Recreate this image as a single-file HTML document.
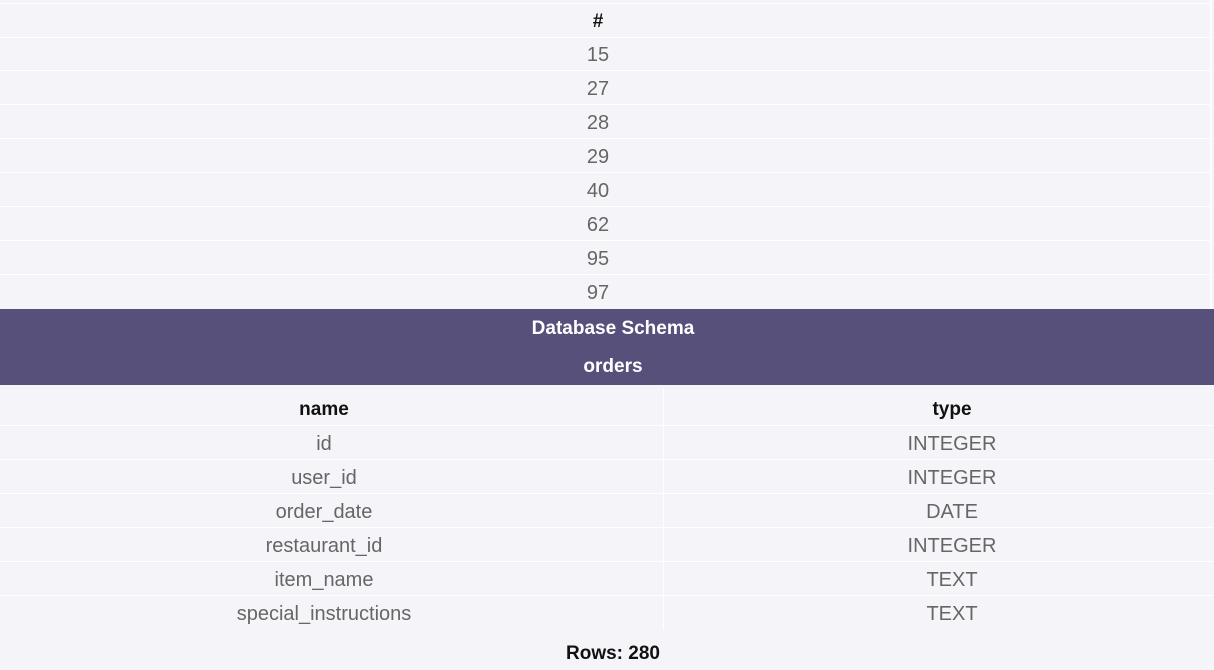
<!DOCTYPE html>
<html><head><style>
html,body{margin:0;padding:0;width:1214px;height:670px;background:#f5f4f9;overflow:hidden;font-family:"Liberation Sans",sans-serif;}
.r{position:absolute;left:0;height:33px;border-bottom:1px solid #fff;line-height:36px;font-size:20px;color:#666;}
.top{width:1210px;}
.t{position:absolute;left:0;width:1196px;text-align:center}
.h{color:#111;font-weight:bold;font-size:19px;}
.band{position:absolute;left:0;top:309px;width:1214px;height:76px;background:#56507a;color:#fff;font-weight:bold;font-size:19px;text-align:center;}
.c1{position:absolute;left:0;width:648px;text-align:center}
.c2{position:absolute;left:664px;width:576px;text-align:center}
.s{width:1214px}
.div{position:absolute;left:663px;top:388px;width:1px;height:242px;background:#fff}
.rb{position:absolute;left:1210px;top:0;width:2px;height:309px;background:#fff}
</style></head><body>
<div class="r top h" style="top:3px;border-top:1px solid #fff;height:33px"><span class="t">#</span></div>
<div class="r top" style="top:37px"><span class="t">15</span></div>
<div class="r top" style="top:71px"><span class="t">27</span></div>
<div class="r top" style="top:105px"><span class="t">28</span></div>
<div class="r top" style="top:139px"><span class="t">29</span></div>
<div class="r top" style="top:173px"><span class="t">40</span></div>
<div class="r top" style="top:207px"><span class="t">62</span></div>
<div class="r top" style="top:241px"><span class="t">95</span></div>
<div class="r top" style="top:275px;border-bottom:none"><span class="t">97</span></div>
<div class="rb"></div>
<div class="band"><div style="position:absolute;top:5px;width:100%;line-height:30px;left:6px">Database Schema</div><div style="position:absolute;top:43px;width:100%;line-height:30px;left:6px">orders</div></div>
<div class="r s h" style="top:388px;height:37px;line-height:43px"><span class="c1">name</span><span class="c2">type</span></div>
<div class="r s" style="top:426px"><span class="c1">id</span><span class="c2">INTEGER</span></div>
<div class="r s" style="top:460px"><span class="c1">user_id</span><span class="c2">INTEGER</span></div>
<div class="r s" style="top:494px"><span class="c1">order_date</span><span class="c2">DATE</span></div>
<div class="r s" style="top:528px"><span class="c1">restaurant_id</span><span class="c2">INTEGER</span></div>
<div class="r s" style="top:562px"><span class="c1">item_name</span><span class="c2">TEXT</span></div>
<div class="r s" style="top:596px;border-bottom:none"><span class="c1">special_instructions</span><span class="c2">TEXT</span></div>
<div class="div"></div>
<div style="position:absolute;left:0;top:640px;width:1226px;text-align:center;font-size:19px;font-weight:bold;color:#111;line-height:28px">Rows: 280</div>
</body></html>
